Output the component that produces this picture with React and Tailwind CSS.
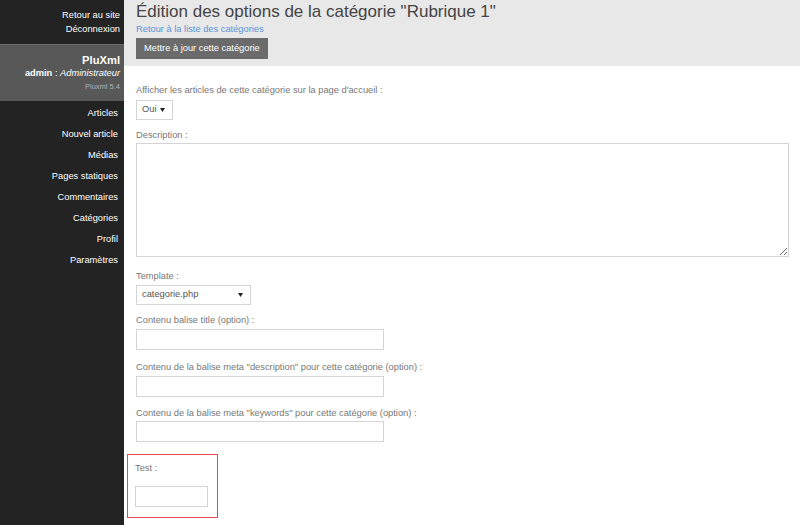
const menu = ["Articles", "Nouvel article", "Médias", "Pages statiques", "Commentaires", "Catégories", "Profil", "Paramètres"]

function Select({ value, className }) {
  return (
    <div
      className={`flex h-[20px] items-center justify-between border border-[#d4d4d4] bg-white pl-[5px] pr-[7px] text-[#555] ${className}`}
    >
      <span>{value}</span>
      <svg width="5" height="4" viewBox="0 0 5 4">
        <path d="M0 0h5L2.5 4z" fill="#222" />
      </svg>
    </div>
  )
}

function Field({ label, children, className = "" }) {
  return (
    <div className={className}>
      <p className="h-[12px] leading-[12px] text-[#777]">{label}</p>
      {children}
    </div>
  )
}

export default function App() {
  return (
    <div className="flex h-[525px] w-[800px] overflow-hidden bg-white font-['Liberation_Sans',Arial,sans-serif] text-[9.3px]">
      <aside className="flex w-[124px] shrink-0 flex-col bg-[#232323] text-right text-white">
        <div className="flex flex-col pr-[4px] pt-[8px] leading-[14px]">
          <a>Retour au site</a>
          <a>Déconnexion</a>
        </div>
        <div className="mt-[8px] flex h-[57px] flex-col border-t border-[#6a6a6a] bg-[#585858] pr-[4px] pt-[9px]">
          <span className="text-[11.2px] font-bold leading-[13px]">PluXml</span>
          <span className="leading-[13px]">
            <b>admin</b> : <i>Administrateur</i>
          </span>
          <span className="mt-[1px] text-[7.5px] leading-[12px] text-[#b0b0b0]">Pluxml 5.4</span>
        </div>
        <nav className="flex flex-col pr-[6px] pt-[2px]">
          {menu.map((m) => (
            <a key={m} className="leading-[21px]">
              {m}
            </a>
          ))}
        </nav>
      </aside>

      <main className="flex min-w-0 flex-1 flex-col">
        <header className="h-[66px] bg-[#e8e8e8] pl-[12px] pt-[2px]">
          <h1 className="text-[17px] leading-[20px] text-[#444]">
            Édition des options de la catégorie "Rubrique 1"
          </h1>
          <a className="block leading-[14px] text-[#5f93d8]">Retour à la liste des catégories</a>
          <button className="mt-[2px] h-[21px] bg-[#6b6b6b] px-[8px] text-white">
            Mettre à jour cette catégorie
          </button>
        </header>

        <form className="flex flex-col pl-[12px] pr-[11px] pt-[18px]">
          <Field label="Afficher les articles de cette catégorie sur la page d'accueil :">
            <Select value="Oui" className="mt-[4px] w-[37px]" />
          </Field>
          <Field label="Description :" className="mt-[9px]">
            <textarea className="mt-[2px] block h-[114px] w-full border border-[#d4d4d4]" />
          </Field>
          <Field label="Template :" className="mt-[13px]">
            <Select value="categorie.php" className="mt-[3px] w-[115px]" />
          </Field>
          <Field label="Contenu balise title (option) :" className="mt-[9px]">
            <input className="mt-[3px] block h-[21px] w-[248px] border border-[#d4d4d4]" />
          </Field>
          <Field label={'Contenu de la balise meta "description" pour cette catégorie (option) :'} className="mt-[11px]">
            <input className="mt-[3px] block h-[21px] w-[248px] border border-[#d4d4d4]" />
          </Field>
          <Field label={'Contenu de la balise meta "keywords" pour cette catégorie (option) :'} className="mt-[10px]">
            <input className="mt-[2px] block h-[21px] w-[248px] border border-[#d4d4d4]" />
          </Field>
          <div className="ml-[-9px] mt-[12px] h-[64px] w-[91px] border border-[#e8474f] pl-[7px] pt-[7px]">
            <p className="h-[12px] leading-[12px] text-[#777]">Test :</p>
            <input className="mt-[12px] block h-[21px] w-[73px] border border-[#d4d4d4]" />
          </div>
        </form>
      </main>
    </div>
  )
}
